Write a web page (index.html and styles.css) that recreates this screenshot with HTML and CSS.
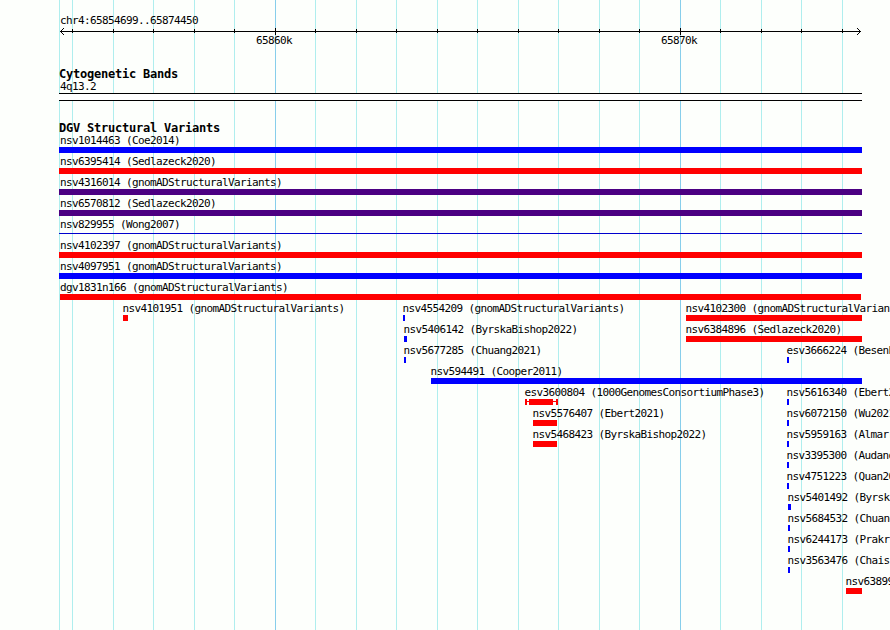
FILE: index.html
```
<!DOCTYPE html>
<html>

<head>
  <meta charset="UTF-8">
  <title>chr4:65854699..65874450</title>
  <link rel="stylesheet" href="styles.css">
</head>

<body>
  <div class="panel">
    <div class="ruler">
      <p class="label">chr4:65854699..65874450</p>
      <svg class="axis" width="801" height="7" shape-rendering="crispEdges">
        <path d="M0 3h801v1H0zM1 2h1v3h-1zM2 1h1v1h-1zM3 0h1v1h-1zM2 5h1v1h-1zM3 6h1v1h-1zM799 2h1v3h-1zM798 1h1v1h-1zM797 0h1v1h-1zM798 5h1v1h-1zM797 6h1v1h-1z"/>
      </svg>
      <div class="scale">
        <span class="label">65860k</span>
        <span class="label">65870k</span>
      </div>
    </div>

    <div class="bands">
      <h4 class="title">Cytogenetic Bands</h4>
      <p class="label">4q13.2</p>
      <div class="band"></div>
    </div>

    <div class="variants">
      <h4 class="title">DGV Structural Variants</h4>
      <div class="rows" id="rows"></div>
    </div>
  </div>
  <script>
    // each row: [name, start, width, type]
    var rows = [
      [["nsv1014463 (Coe2014)", 59, 803, "gain full"]],
      [["nsv6395414 (Sedlazeck2020)", 59, 803, "loss full"]],
      [["nsv4316014 (gnomADStructuralVariants)", 59, 803, "complex full"]],
      [["nsv6570812 (Sedlazeck2020)", 59, 803, "complex full"]],
      [["nsv829955 (Wong2007)", 59, 803, "thin full"]],
      [["nsv4102397 (gnomADStructuralVariants)", 59, 803, "loss full"]],
      [["nsv4097951 (gnomADStructuralVariants)", 59, 803, "gain full"]],
      [["dgv1831n166 (gnomADStructuralVariants)", 60, 801, "loss merged"]],
      [["nsv4101951 (gnomADStructuralVariants)", 123, 5, "loss"],
       ["nsv4554209 (gnomADStructuralVariants)", 403, 2, "gain"],
       ["nsv4102300 (gnomADStructuralVariants)", 686, 176, "loss"]],
      [["nsv5406142 (ByrskaBishop2022)", 404, 3, "gain"],
       ["nsv6384896 (Sedlazeck2020)", 686, 176, "loss"]],
      [["nsv5677285 (Chuang2021)", 404, 2, "gain"],
       ["esv3666224 (Besenbacher2016)", 787, 2, "gain"]],
      [["nsv594491 (Cooper2011)", 431, 431, "gain"]],
      [["esv3600804 (1000GenomesConsortiumPhase3)", 525, 33, "range"],
       ["nsv5616340 (Ebert2021)", 787, 2, "gain"]],
      [["nsv5576407 (Ebert2021)", 533, 24, "loss"],
       ["nsv6072150 (Wu2021)", 787, 2, "gain"]],
      [["nsv5468423 (ByrskaBishop2022)", 533, 24, "loss"],
       ["nsv5959163 (Almarri2020)", 787, 2, "gain"]],
      [["nsv3395300 (Audano2019)", 787, 2, "gain"]],
      [["nsv4751223 (Quan2021)", 787, 2, "gain"]],
      [["nsv5401492 (ByrskaBishop2022)", 788, 3, "gain"]],
      [["nsv5684532 (Chuang2021)", 788, 2, "gain"]],
      [["nsv6244173 (Prakrithi)", 788, 2, "gain"]],
      [["nsv3563476 (Chaisson2019)", 788, 2, "gain"]],
      [["nsv6389942", 846, 16, "loss"]]
    ];

    var html = "";
    for (var i = 0; i < rows.length; i++) {
      html += '<div class="row">';
      for (var j = 0; j < rows[i].length; j++) {
        var f = rows[i][j];
        html += '<div class="feature ' + f[3] + '" style="margin-left:' + f[1] + 'px">' +
          '<p class="label">' + f[0] + '</p>' +
          '<div class="bar" style="width:' + f[2] + 'px"></div></div>';
      }
      html += '</div>';
    }
    document.getElementById("rows").innerHTML = html;
  </script>
</body>

</html>
```

FILE: styles.css
```
* {
  padding: 0;
  margin: 0;
  box-sizing: border-box;
}

body {
  background: #fdfffc;
  color: #000;
  font-family: "DejaVu Sans Mono", monospace;
  overflow: hidden;
}

/* major lines every 10k, minor lines every 1k */
.panel {
  width: 890px;
  height: 630px;
  overflow: hidden;
  background-image:
    linear-gradient(#87ceeb, #87ceeb),
    linear-gradient(#87ceeb, #87ceeb),
    linear-gradient(#afeeee, #afeeee),
    repeating-linear-gradient(90deg, #afeeee 0, #afeeee 1px, transparent 1px, transparent 41px, #afeeee 41px, #afeeee 42px, transparent 42px, transparent 81px);
  background-position: 275px 0, 680px 0, 59px 0, 72px 0;
  background-size: 1px 100%, 1px 100%, 1px 100%, 790px 100%;
  background-repeat: no-repeat;
}

.label {
  font-size: 11px;
  line-height: 12px;
  letter-spacing: -0.622px;
  white-space: nowrap;
}

.title {
  font-size: 12px;
  line-height: 13px;
  font-weight: bold;
  letter-spacing: -0.224px;
  white-space: nowrap;
}

.ruler {
  height: 68px;
  padding: 15px 0 0 60px;
}

.axis {
  display: block;
  margin-top: 1px;
  background-image:
    linear-gradient(#000, #000),
    linear-gradient(#000, #000),
    repeating-linear-gradient(90deg, #000 0, #000 1px, transparent 1px, transparent 41px, #000 41px, #000 42px, transparent 42px, transparent 81px);
  background-position: 215px 0, 620px 0, 12px 1px;
  background-size: 1px 7px, 1px 7px, 785px 4px;
  background-repeat: no-repeat;
}

.scale {
  display: flex;
  gap: 369px;
  padding-left: 196px;
}

.bands {
  height: 54px;
  padding-left: 59px;
}

.bands .label {
  padding-left: 1px;
}

.band {
  width: 803px;
  height: 8px;
  background: #fff;
  border-top: 1px solid #000;
  border-bottom: 1px solid #000;
}

.variants .title {
  padding-left: 59px;
}

.row {
  display: grid;
  height: 21px;
}

.feature {
  grid-area: 1 / 1;
}

.feature .label {
  margin-left: -0.5px;
}

.full .label {
  margin-left: 1px;
}

.merged .label {
  margin-left: 0;
}

.bar {
  height: 6px;
}

.gain .bar {
  background: #00f;
}

.loss .bar {
  background: #f00;
}

.complex .bar {
  background: #4b0082;
}

.thin .bar {
  height: 1px;
  margin-top: 2px;
  background: #0000cd;
}

/* solid call with uncertain ends */
.range .bar {
  background-image:
    linear-gradient(#f00, #f00),
    linear-gradient(#f00, #f00),
    linear-gradient(#f00, #f00),
    linear-gradient(#f00, #f00);
  background-position: 0 0, 4px 0, 31px 0, 0 2px;
  background-size: 2px 6px, 24px 6px, 2px 6px, 33px 1px;
  background-repeat: no-repeat;
}
```
